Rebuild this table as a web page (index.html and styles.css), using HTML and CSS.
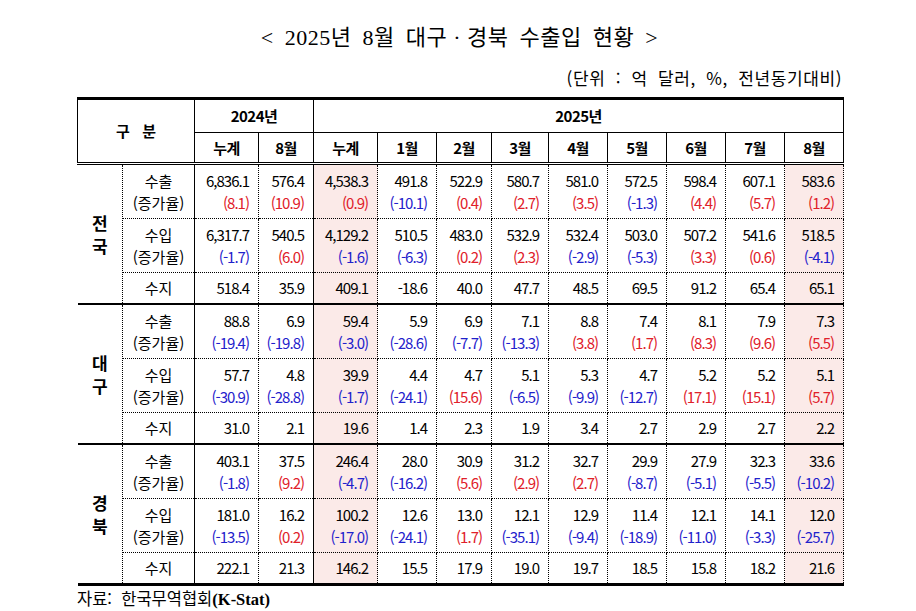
FILE: index.html
```html
<!DOCTYPE html>
<html lang="ko">
<head>
<meta charset="utf-8">
<title>2025년 8월 대구·경북 수출입 현황</title>
<link rel="stylesheet" href="styles.css">
</head>
<body>
<div class="page">
  <h1 class="title">&lt; 2025년 8월 대구<span class="dot">·</span>경북 수출입 현황 &gt;</h1>
  <div class="unit">(단위 : 억 달러, %, 전년동기대비)</div>
  <table class="t">
    <colgroup>
      <col class="c-reg"><col class="c-item">
      <col class="c-a"><col class="c-b">
      <col class="c-a"><col class="c-m1"><col class="c-m2"><col class="c-m3"><col class="c-m1"><col class="c-m1"><col class="c-m1"><col class="c-m1"><col class="c-m1">
    </colgroup>
    <thead>
      <tr class="h1">
        <th rowspan="2" colspan="2" class="gubun">구&nbsp;&nbsp;&nbsp;분</th>
        <th colspan="2" class="sr">2024년</th>
        <th colspan="9">2025년</th>
      </tr>
      <tr class="h2">
        <th class="dr">누계</th><th class="sr">8월</th>
        <th>누계</th><th>1월</th><th>2월</th><th>3월</th><th>4월</th><th>5월</th><th>6월</th><th>7월</th><th>8월</th>
      </tr>
    </thead>
    <tbody>
      <tr class="rr">
        <th rowspan="3" class="reg">전<br>국</th>
        <th class="item">수출<br>(증가율)</th>
        <td>6,836.1<br><span class="r">(8.1)</span></td>
        <td class="sr">576.4<br><span class="r">(10.9)</span></td>
        <td class="pk">4,538.3<br><span class="r">(0.9)</span></td>
        <td>491.8<br><span class="b">(-10.1)</span></td>
        <td>522.9<br><span class="r">(0.4)</span></td>
        <td>580.7<br><span class="r">(2.7)</span></td>
        <td>581.0<br><span class="r">(3.5)</span></td>
        <td>572.5<br><span class="b">(-1.3)</span></td>
        <td>598.4<br><span class="r">(4.4)</span></td>
        <td>607.1<br><span class="r">(5.7)</span></td>
        <td class="pk">583.6<br><span class="r">(1.2)</span></td>
      </tr>
      <tr class="rr">
        <th class="item">수입<br>(증가율)</th>
        <td>6,317.7<br><span class="b">(-1.7)</span></td>
        <td class="sr">540.5<br><span class="r">(6.0)</span></td>
        <td class="pk">4,129.2<br><span class="b">(-1.6)</span></td>
        <td>510.5<br><span class="b">(-6.3)</span></td>
        <td>483.0<br><span class="r">(0.2)</span></td>
        <td>532.9<br><span class="r">(2.3)</span></td>
        <td>532.4<br><span class="b">(-2.9)</span></td>
        <td>503.0<br><span class="b">(-5.3)</span></td>
        <td>507.2<br><span class="r">(3.3)</span></td>
        <td>541.6<br><span class="r">(0.6)</span></td>
        <td class="pk">518.5<br><span class="b">(-4.1)</span></td>
      </tr>
      <tr class="rs">
        <th class="item">수지</th>
        <td>518.4</td><td class="sr">35.9</td><td class="pk">409.1</td><td>-18.6</td><td>40.0</td><td>47.7</td><td>48.5</td><td>69.5</td><td>91.2</td><td>65.4</td><td class="pk">65.1</td>
      </tr>
    </tbody>
    <tbody>
      <tr class="rr">
        <th rowspan="3" class="reg">대<br>구</th>
        <th class="item">수출<br>(증가율)</th>
        <td>88.8<br><span class="b">(-19.4)</span></td>
        <td class="sr">6.9<br><span class="b">(-19.8)</span></td>
        <td class="pk">59.4<br><span class="b">(-3.0)</span></td>
        <td>5.9<br><span class="b">(-28.6)</span></td>
        <td>6.9<br><span class="b">(-7.7)</span></td>
        <td>7.1<br><span class="b">(-13.3)</span></td>
        <td>8.8<br><span class="r">(3.8)</span></td>
        <td>7.4<br><span class="r">(1.7)</span></td>
        <td>8.1<br><span class="r">(8.3)</span></td>
        <td>7.9<br><span class="r">(9.6)</span></td>
        <td class="pk">7.3<br><span class="r">(5.5)</span></td>
      </tr>
      <tr class="rr">
        <th class="item">수입<br>(증가율)</th>
        <td>57.7<br><span class="b">(-30.9)</span></td>
        <td class="sr">4.8<br><span class="b">(-28.8)</span></td>
        <td class="pk">39.9<br><span class="b">(-1.7)</span></td>
        <td>4.4<br><span class="b">(-24.1)</span></td>
        <td>4.7<br><span class="r">(15.6)</span></td>
        <td>5.1<br><span class="b">(-6.5)</span></td>
        <td>5.3<br><span class="b">(-9.9)</span></td>
        <td>4.7<br><span class="b">(-12.7)</span></td>
        <td>5.2<br><span class="r">(17.1)</span></td>
        <td>5.2<br><span class="r">(15.1)</span></td>
        <td class="pk">5.1<br><span class="r">(5.7)</span></td>
      </tr>
      <tr class="rs">
        <th class="item">수지</th>
        <td>31.0</td><td class="sr">2.1</td><td class="pk">19.6</td><td>1.4</td><td>2.3</td><td>1.9</td><td>3.4</td><td>2.7</td><td>2.9</td><td>2.7</td><td class="pk">2.2</td>
      </tr>
    </tbody>
    <tbody>
      <tr class="rr">
        <th rowspan="3" class="reg">경<br>북</th>
        <th class="item">수출<br>(증가율)</th>
        <td>403.1<br><span class="b">(-1.8)</span></td>
        <td class="sr">37.5<br><span class="r">(9.2)</span></td>
        <td class="pk">246.4<br><span class="b">(-4.7)</span></td>
        <td>28.0<br><span class="b">(-16.2)</span></td>
        <td>30.9<br><span class="r">(5.6)</span></td>
        <td>31.2<br><span class="r">(2.9)</span></td>
        <td>32.7<br><span class="r">(2.7)</span></td>
        <td>29.9<br><span class="b">(-8.7)</span></td>
        <td>27.9<br><span class="b">(-5.1)</span></td>
        <td>32.3<br><span class="b">(-5.5)</span></td>
        <td class="pk">33.6<br><span class="b">(-10.2)</span></td>
      </tr>
      <tr class="rr">
        <th class="item">수입<br>(증가율)</th>
        <td>181.0<br><span class="b">(-13.5)</span></td>
        <td class="sr">16.2<br><span class="r">(0.2)</span></td>
        <td class="pk">100.2<br><span class="b">(-17.0)</span></td>
        <td>12.6<br><span class="b">(-24.1)</span></td>
        <td>13.0<br><span class="r">(1.7)</span></td>
        <td>12.1<br><span class="b">(-35.1)</span></td>
        <td>12.9<br><span class="b">(-9.4)</span></td>
        <td>11.4<br><span class="b">(-18.9)</span></td>
        <td>12.1<br><span class="b">(-11.0)</span></td>
        <td>14.1<br><span class="b">(-3.3)</span></td>
        <td class="pk">12.0<br><span class="b">(-25.7)</span></td>
      </tr>
      <tr class="rs">
        <th class="item">수지</th>
        <td>222.1</td><td class="sr">21.3</td><td class="pk">146.2</td><td>15.5</td><td>17.9</td><td>19.0</td><td>19.7</td><td>18.5</td><td>15.8</td><td>18.2</td><td class="pk">21.6</td>
      </tr>
    </tbody>
  </table>
  <p class="source">자료:&nbsp; 한국무역협회<span class="ks">(K-Stat)</span></p>
</div>
</body>
</html>
```

FILE: styles.css
```css
html, body {
  margin: 0;
  padding: 0;
  background: #ffffff;
}

.page {
  width: 765px;
  margin-left: 77px;
  padding-top: 24px;
  color: #000;
  font-family: "Noto Sans CJK KR", "Noto Sans", sans-serif;
}

.title {
  margin: 0;
  height: 32px;
  font-family: "Liberation Serif", "Noto Sans CJK KR", serif;
  font-weight: normal;
  font-size: 22px;
  line-height: 28px;
  text-align: center;
  letter-spacing: 0.5px;
  word-spacing: 5px;
}

.title .dot {
  padding: 0 6px;
}

.unit {
  height: 41px;
  font-size: 17px;
  line-height: 44px;
  text-align: right;
  letter-spacing: 0.6px;
  word-spacing: 5px;
}

.t {
  width: 765px;
  border-collapse: collapse;
  table-layout: fixed;
  border-top: 3px solid #000;
  border-bottom: 3px solid #000;
}

.c-reg { width: 45px; }
.c-item { width: 72px; }
.c-a { width: 64px; }
.c-b { width: 55px; }
.c-m1 { width: 59px; }
.c-m2 { width: 55px; }
.c-m3 { width: 57px; }

.t th, .t td {
  padding: 0;
  font-size: 15px;
  line-height: 22px;
  border: 1px solid #000;
  vertical-align: middle;
}

.t thead th {
  font-weight: bold;
  text-align: center;
  letter-spacing: -0.5px;
}

.t thead .h1 th { height: 32px; }
.t thead .h2 th { height: 29px; }
.t thead { border-bottom: 3px double #000; }

.t thead th.dr { border-right: 1px dotted #000; }
.t thead th.gubun { letter-spacing: 0; }

.t tbody { border-top: 2px solid #000; }

.t tbody th, .t tbody td {
  border-left: 1px dotted #000;
  border-right: 1px dotted #000;
  border-top: 1px dotted #000;
  border-bottom: 1px dotted #000;
}

.t tbody th.item {
  font-weight: normal;
  text-align: center;
  border-right: 1px solid #000;
}

.t tbody th.reg {
  font-weight: bold;
  font-size: 17px;
  line-height: 23px;
  text-align: center;
  border-left: none;
}

.t td {
  text-align: right;
  padding-right: 9px;
  letter-spacing: -1px;
}

.t td.sr, .t th.sr { border-right: 1px solid #000; }

.t td.pk { background: #fbeae8; }

.rr td, .rr th { height: 53px; }
.rs td, .rs th { height: 30px; }

.r { color: #e0202a; }
.b { color: #1f22cc; }

.source {
  margin: 2px 0 0 0;
  font-family: "Noto Sans CJK KR", sans-serif;
  font-size: 16.5px;
  line-height: 20px;
}

.source .ks {
  font-family: "Liberation Serif", serif;
  font-weight: bold;
  font-size: 16.5px;
}
```
